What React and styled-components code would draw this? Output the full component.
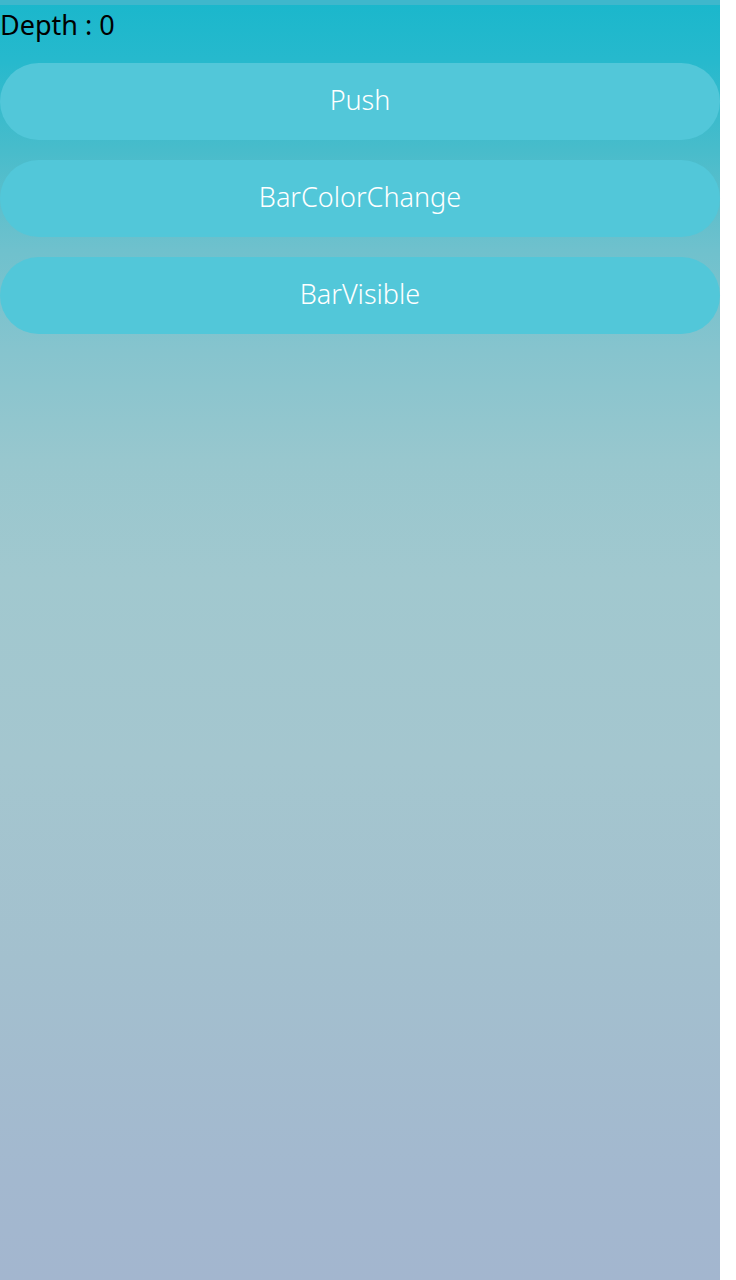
import React from "react";
import styled, { createGlobalStyle } from "styled-components";

const GlobalStyle = createGlobalStyle`
  html, body {
    margin: 0;
    padding: 0;
    background: #ffffff;
  }
  body {
    font-family: "Noto Sans", "Open Sans", sans-serif;
  }
`;

const Screen = styled.div`
  width: 720px;
  height: 1280px;
  display: flex;
  flex-direction: column;
  background: linear-gradient(
    180deg,
    #1ab7cc 0px,
    #26b9cd 60px,
    #48bccb 150px,
    #6fc1cd 250px,
    #86c4ce 350px,
    #98c7ce 460px,
    #a1c8cf 580px,
    #a4c6cf 760px,
    #a3c0ce 960px,
    #a3b8cf 1180px,
    #a3b6cf 1280px
  );
`;

const TopBar = styled.div`
  height: 5px;
  background: #3fb7cc;
`;

const DepthLabel = styled.div`
  font-size: 27px;
  line-height: 32px;
  color: #000;
  padding-top: 4px;
  height: 58px;
  box-sizing: border-box;
`;

const ButtonList = styled.div`
  display: flex;
  flex-direction: column;
  gap: 20px;
`;

const PillButton = styled.button`
  width: 720px;
  height: 77px;
  border: none;
  border-radius: 39px;
  background: #52c7d9;
  color: #ffffff;
  font-family: "Noto Sans", "Open Sans", sans-serif;
  font-weight: 300;
  font-size: 27px;
  display: flex;
  align-items: center;
  justify-content: center;
  padding: 0 0 5px;
  cursor: pointer;
`;

const App = () => {
  const buttons = ["Push", "BarColorChange", "BarVisible"];
  return (
    <>
      <GlobalStyle />
      <Screen>
        <TopBar />
        <DepthLabel>Depth : 0</DepthLabel>
        <ButtonList>
          {buttons.map((b) => (
            <PillButton key={b}>{b}</PillButton>
          ))}
        </ButtonList>
      </Screen>
    </>
  );
};

export default App;
